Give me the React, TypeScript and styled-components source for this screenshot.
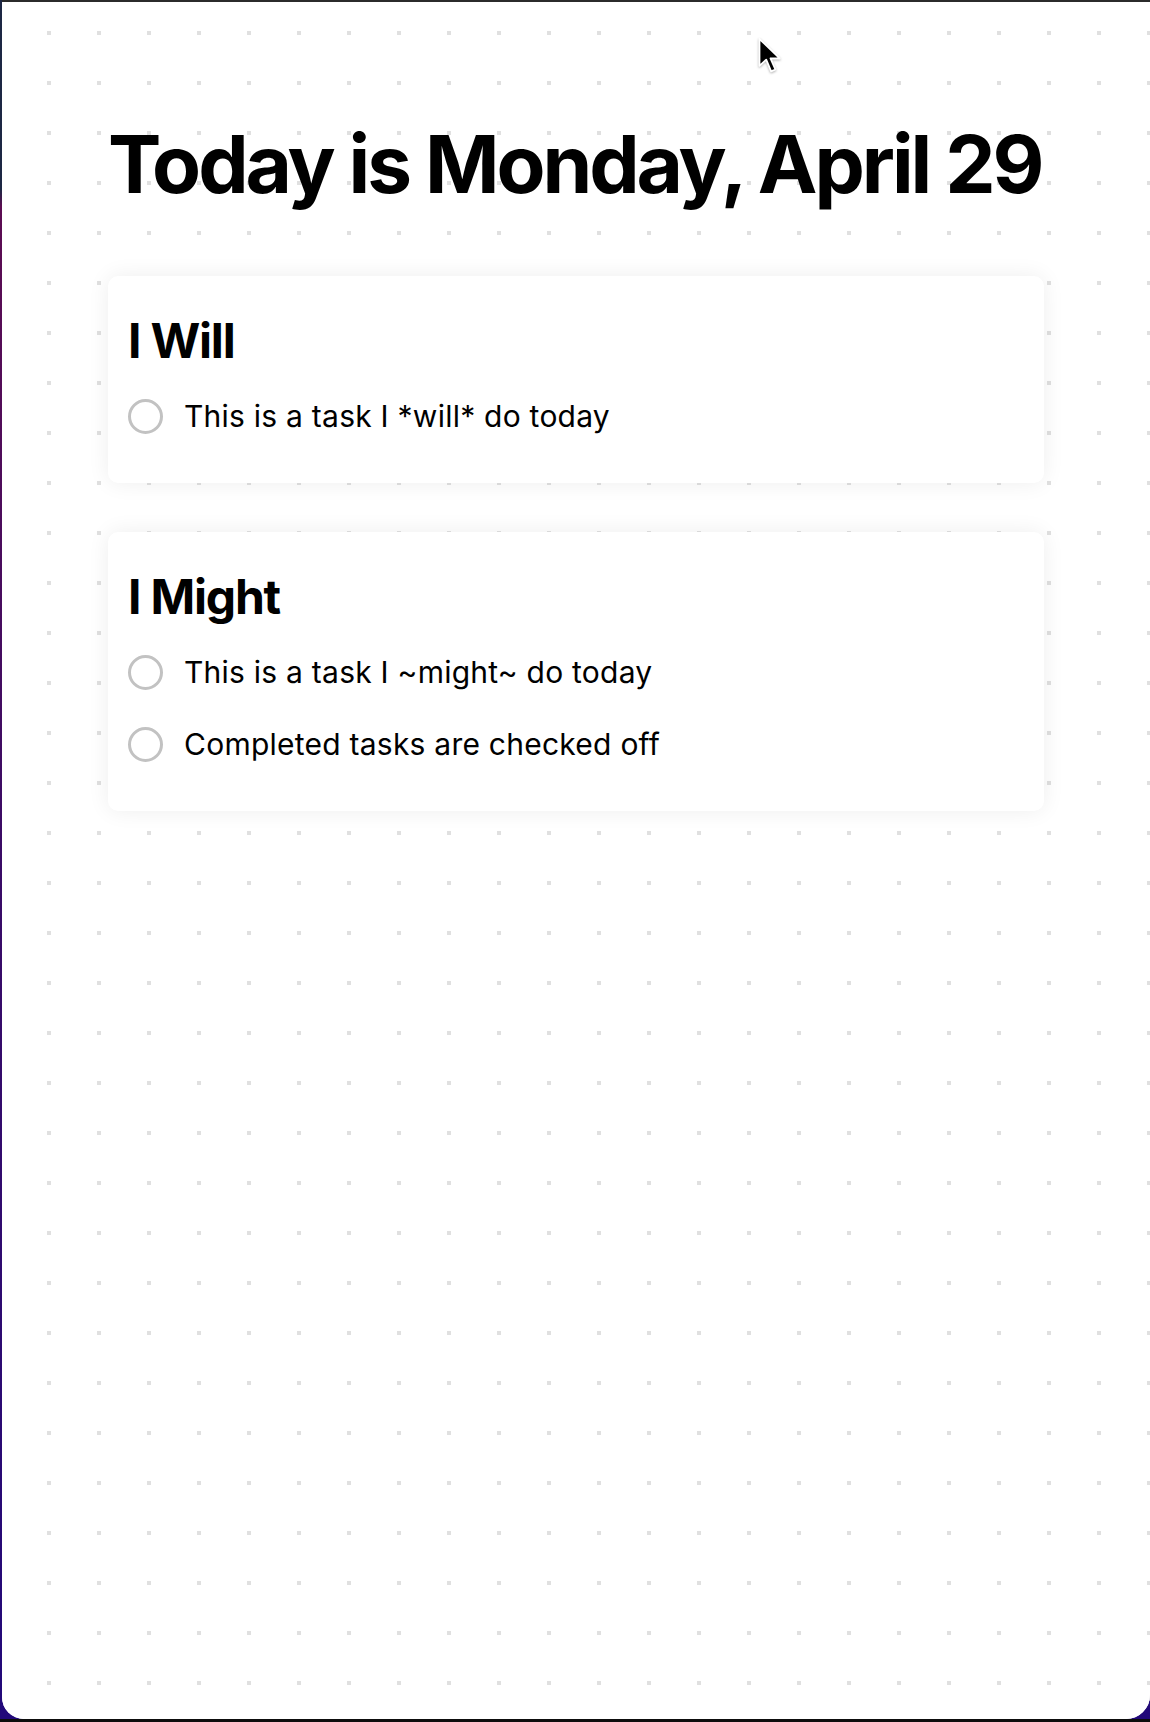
import styled, { createGlobalStyle } from "styled-components"

const tasks = {
	will: ["This is a task I *will* do today"],
	might: ["This is a task I ~might~ do today", "Completed tasks are checked off"],
}

const GlobalStyle = createGlobalStyle`
	html, body {
		margin: 0;
		padding: 0;
		height: 100%;
	}
	body {
		font-family: Inter, "Noto Sans", "Liberation Sans", sans-serif;
		color: #000;
		background:
			linear-gradient(to top, #0d0d0d 0 3px, transparent 3px),
			linear-gradient(180deg, #1d2744 0%, #1d2744 11%, #5c0c52 12%, #3a0b66 50%, #22097a 100%);
	}
`

const Cursor = () => (
	<CursorWrap width="27" height="40" viewBox="0 0 22 32">
		<path d="M2 2 L2 24 L7.5 19 L11.5 28.5 L15 27 L11 18 L18.5 18 Z" fill="#000" stroke="#fff" strokeWidth="1.5" strokeLinejoin="round" />
	</CursorWrap>
)

const TaskRow = ({ text }: { text: string }) => (
	<Row>
		<Check />
		<TaskText>{text}</TaskText>
	</Row>
)

export default function App() {
	return (
		<>
			<GlobalStyle />
			<Window>
				<Cursor />
				<Main>
					<Title>Today is Monday, April 29</Title>
					<Card>
						<CardTitle>I Will</CardTitle>
						{tasks.will.map((t) => <TaskRow key={t} text={t} />)}
					</Card>
					<Card>
						<CardTitle>I Might</CardTitle>
						{tasks.might.map((t) => <TaskRow key={t} text={t} />)}
					</Card>
				</Main>
			</Window>
		</>
	)
}

const Window = styled.div`
	position: relative;
	box-sizing: border-box;
	margin-left: 2px;
	height: calc(100vh - 3px);
	border-top: 2px solid #2b2b2b;
	border-bottom-left-radius: 22px;
	border-bottom-right-radius: 24px;
	background-color: #fff;
	background-image:
		linear-gradient(to bottom, transparent 4px, #fff 4px),
		linear-gradient(to right, #e0e0e0 4px, transparent 4px);
	background-size: 50px 50px;
	background-position: 45px 29px;
	padding-top: 114px;
	overflow: hidden;
`
const CursorWrap = styled.svg`
	position: absolute;
	left: 755px;
	top: 34px;
	filter: drop-shadow(0 1px 1px rgba(0, 0, 0, 0.3));
`
const Main = styled.main`
	width: 936px;
	margin: 0 auto;
	display: flex;
	flex-direction: column;
	gap: 49px;
`
const Title = styled.h1`
	margin: 0 0 15px;
	font-size: 80px;
	line-height: 96px;
	font-weight: 700;
	letter-spacing: -0.038em;
	color: #000;
	white-space: nowrap;
`
const Card = styled.section`
	box-sizing: border-box;
	padding: 36px 20px 31px;
	background: #fff;
	border-radius: 10px;
	box-shadow: 0 0 22px rgba(0, 0, 0, 0.07);
`
const CardTitle = styled.h2`
	margin: 0 0 10px;
	font-size: 48px;
	line-height: 58px;
	font-weight: 700;
	letter-spacing: -0.025em;
`
const Row = styled.div`
	height: 72px;
	display: flex;
	align-items: center;
	gap: 21px;
`
const Check = styled.span`
	box-sizing: border-box;
	width: 35px;
	height: 35px;
	flex: none;
	border-radius: 50%;
	border: 3px solid #c2c2c2;
`
const TaskText = styled.span`
	font-size: 30px;
	font-weight: 400;
	letter-spacing: 0.008em;
	color: #000;
`
